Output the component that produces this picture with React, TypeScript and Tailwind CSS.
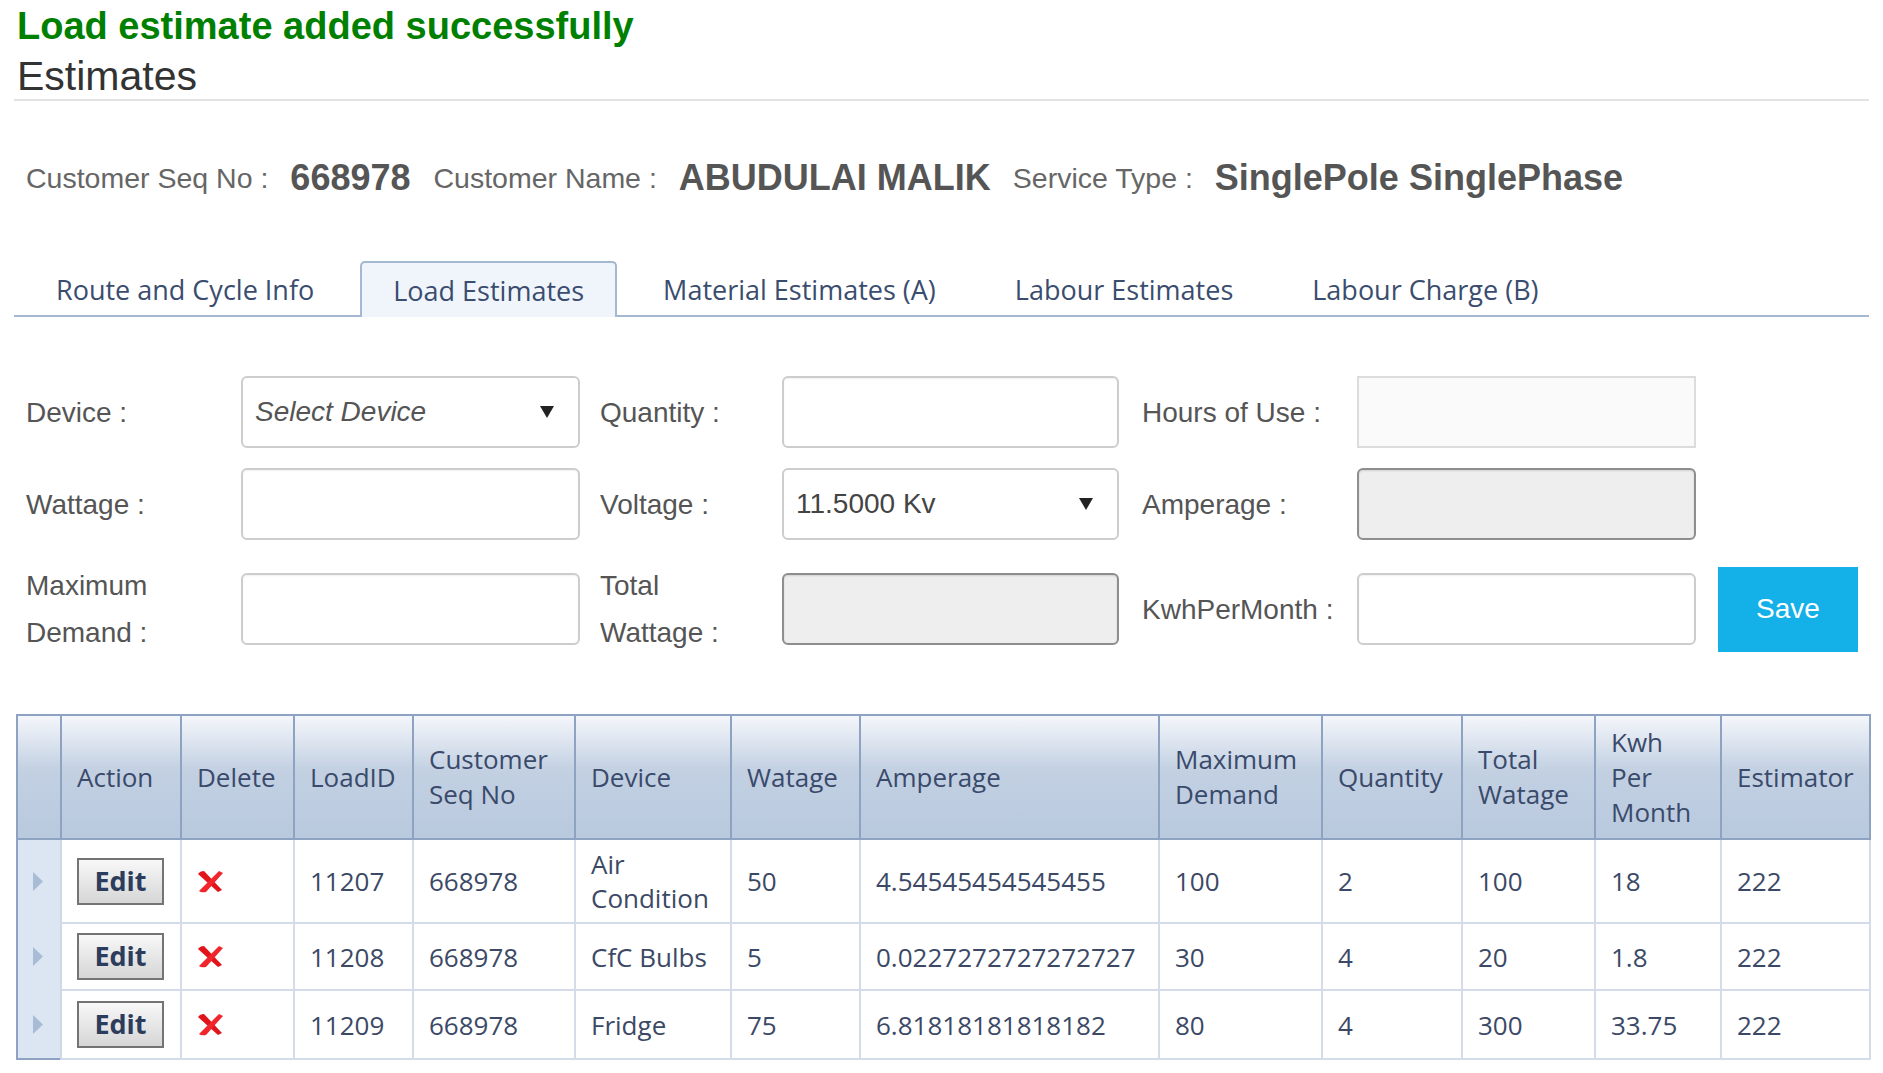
import type { ReactNode } from 'react'

const TABS = ['Route and Cycle Info', 'Load Estimates', 'Material Estimates (A)', 'Labour Estimates', 'Labour Charge (B)']

const COLS = [
  { w: 120, label: ['Action'] },
  { w: 113, label: ['Delete'] },
  { w: 119, label: ['LoadID'] },
  { w: 162, label: ['Customer', 'Seq No'] },
  { w: 156, label: ['Device'] },
  { w: 129, label: ['Watage'] },
  { w: 299, label: ['Amperage'] },
  { w: 163, label: ['Maximum', 'Demand'] },
  { w: 140, label: ['Quantity'] },
  { w: 133, label: ['Total', 'Watage'] },
  { w: 126, label: ['Kwh', 'Per', 'Month'] },
  { w: 149, label: ['Estimator'] },
]

const ROWS = [
  { id: '11207', seq: '668978', device: 'Air Condition', watt: '50', amp: '4.54545454545455', max: '100', qty: '2', total: '100', kwh: '18', est: '222', h: 'h-[84px]' },
  { id: '11208', seq: '668978', device: 'CfC Bulbs', watt: '5', amp: '0.0227272727272727', max: '30', qty: '4', total: '20', kwh: '1.8', est: '222', h: 'h-[67px]' },
  { id: '11209', seq: '668978', device: 'Fridge', watt: '75', amp: '6.81818181818182', max: '80', qty: '4', total: '300', kwh: '33.75', est: '222', h: 'h-[69px]' },
]

function Label({ className = '', children }: { className?: string; children: ReactNode }) {
  return <div className={`text-[28px] text-[#555] leading-[47px] shrink-0 ${className}`}>{children}</div>
}

function Input({ className = '', variant = 'normal' }: { className?: string; variant?: 'normal' | 'readonly' | 'disabled' }) {
  const look =
    variant === 'readonly'
      ? 'bg-[#fafafa] border-[#dcdcdc]'
      : variant === 'disabled'
        ? 'bg-[#eeeeee] border-[#8e8e8e] rounded-[6px] shadow-[inset_0_1px_2px_rgba(0,0,0,0.12)]'
        : 'bg-white border-[#cdcdcd] rounded-[6px] shadow-[inset_0_1px_2px_rgba(0,0,0,0.06)]'
  return <div className={`h-[72px] border-2 shrink-0 ${look} ${className}`} />
}

function Select({ className = '', text, italic }: { className?: string; text: string; italic?: boolean }) {
  return (
    <div className={`h-[72px] border-2 border-[#cdcdcd] rounded-[6px] bg-white flex items-center justify-between pl-[12px] pr-[24px] shrink-0 ${className}`}>
      <span className={`text-[28px] ${italic ? 'italic text-[#555]' : 'text-[#444]'}`}>{text}</span>
      <svg width="14" height="12" viewBox="0 0 14 12">
        <polygon points="0,0 14,0 7,12" fill="#222" />
      </svg>
    </div>
  )
}

function RedX() {
  return (
    <svg width="27" height="23" viewBox="0 0 27 23">
      <path d="M1 4 Q3 1 7 1 L25 20 L21 22 Z" fill="#e11419" />
      <path d="M22 1 L26 3 L9 22 Q4 23 2 21 Z" fill="#f0262c" />
    </svg>
  )
}

function EditButton() {
  return (
    <div className="w-[87px] h-[47px] border-2 border-[#747474] bg-linear-to-b from-[#f8f8f8] to-[#d6d6d6] flex items-center justify-center text-[27px] font-bold text-[#2c3c5c]">
      Edit
    </div>
  )
}

export default function App() {
  return (
    <div className="w-[1883px] h-[1073px] bg-white font-['Liberation_Sans',Arial,sans-serif] px-[14px] overflow-hidden">
      <div className="pt-[4px] pl-[3px] text-[38px] font-bold text-[#008000] leading-[44px]">
        Load estimate added successfully
      </div>
      <div className="mt-[5px] pl-[3px] text-[41px] text-[#333] leading-[46px] border-b-2 border-[#e3e3e3] h-[48px]">
        Estimates
      </div>

      {/* customer summary */}
      <div className="mt-[55px] pl-[12px] flex items-center h-[44px] whitespace-nowrap">
        <span className="text-[28.5px] text-[#666]">Customer Seq No :</span>
        <span className="ml-[22px] text-[36px] font-bold text-[#555]">668978</span>
        <span className="ml-[23px] text-[28.5px] text-[#666]">Customer Name :</span>
        <span className="ml-[22px] text-[36px] font-bold text-[#555]">ABUDULAI MALIK</span>
        <span className="ml-[22px] text-[28.5px] text-[#666]">Service Type :</span>
        <span className="ml-[22px] text-[36px] font-bold text-[#555]">SinglePole SinglePhase</span>
      </div>

      {/* tabs */}
      <div className="mt-[61px] flex items-end border-b-2 border-[#a5b8d1] pl-[9px] gap-[13px] font-['Open_Sans','Segoe_UI',sans-serif] text-[27px] text-[#3a4d6e]">
        {TABS.map((t) =>
          t === 'Load Estimates' ? (
            <div key={t} className="h-[56px] -mb-[2px] px-[31px] pt-[2px] flex items-center border-2 border-b-0 border-[#a5b8d1] rounded-t-[5px] bg-[#f0f5fc]">
              {t}
            </div>
          ) : (
            <div key={t} className="h-[54px] px-[33px] pt-[4px] flex items-center">
              {t}
            </div>
          ),
        )}
      </div>

      {/* form */}
      <div className="mt-[59px] pl-[12px]">
        <div className="flex items-center h-[72px]">
          <Label className="w-[215px]">Device :</Label>
          <Select className="w-[339px]" text="Select Device" italic />
          <Label className="w-[182px] ml-[20px]">Quantity :</Label>
          <Input className="w-[337px]" />
          <Label className="w-[215px] ml-[23px]">Hours of Use :</Label>
          <Input className="w-[339px]" variant="readonly" />
        </div>
        <div className="flex items-center h-[72px] mt-[20px]">
          <Label className="w-[215px]">Wattage :</Label>
          <Input className="w-[339px]" />
          <Label className="w-[182px] ml-[20px]">Voltage :</Label>
          <Select className="w-[337px]" text="11.5000 Kv" />
          <Label className="w-[215px] ml-[23px]">Amperage :</Label>
          <Input className="w-[339px]" variant="disabled" />
        </div>
        <div className="flex items-center h-[94px] mt-[22px]">
          <Label className="w-[215px]">
            Maximum
            <br />
            Demand :
          </Label>
          <Input className="w-[339px]" />
          <Label className="w-[182px] ml-[20px]">
            Total
            <br />
            Wattage :
          </Label>
          <Input className="w-[337px]" variant="disabled" />
          <Label className="w-[215px] ml-[23px]">KwhPerMonth :</Label>
          <Input className="w-[339px]" />
          <button className="ml-[22px] w-[140px] h-[85px] bg-[#14b1e8] text-white text-[28px]">Save</button>
        </div>
      </div>

      {/* grid */}
      <table className="mt-[58px] ml-[2px] table-fixed border-collapse border-2 border-[#8ea3c1] w-[1853px] font-['Open_Sans','Segoe_UI',sans-serif] text-[26px] text-[#3b4966]">
        <colgroup>
          <col className="w-[44px]" />
          {COLS.map((c) => (
            <col key={c.label.join()} style={{ width: c.w }} />
          ))}
        </colgroup>
        <thead>
          <tr className="h-[124px] bg-linear-to-b from-[#f5f7fb] via-[#c2d0e2] via-45% to-[#b9c9de]">
            <th className="border-2 border-[#8ea3c1]" />
            {COLS.map((c) => (
              <th key={c.label.join()} className="border-2 border-[#8ea3c1] text-left font-normal pl-[15px] leading-[35px] text-[#3a4a6b]">
                {c.label.map((l, i) => (
                  <div key={i}>{l}</div>
                ))}
              </th>
            ))}
          </tr>
        </thead>
        <tbody>
          {ROWS.map((r) => (
            <tr key={r.id} className={r.h}>
              <td className="bg-[#dce6f2] pl-[15px] border-r-2 border-[#cfd9e6]">
                <svg width="10" height="19" viewBox="0 0 10 19">
                  <polygon points="0,0 10,9.5 0,19" fill="#a9bcd6" />
                </svg>
              </td>
              <td className="border-2 border-[#d3dce8] pl-[15px]">
                <EditButton />
              </td>
              <td className="border-2 border-[#d3dce8] pl-[15px]">
                <RedX />
              </td>
              {[r.id, r.seq, r.device, r.watt, r.amp, r.max, r.qty, r.total, r.kwh, r.est].map((v, i) => (
                <td key={i} className="border-2 border-[#d3dce8] pl-[15px] leading-[34px]">
                  {v}
                </td>
              ))}
            </tr>
          ))}
        </tbody>
      </table>
    </div>
  )
}
